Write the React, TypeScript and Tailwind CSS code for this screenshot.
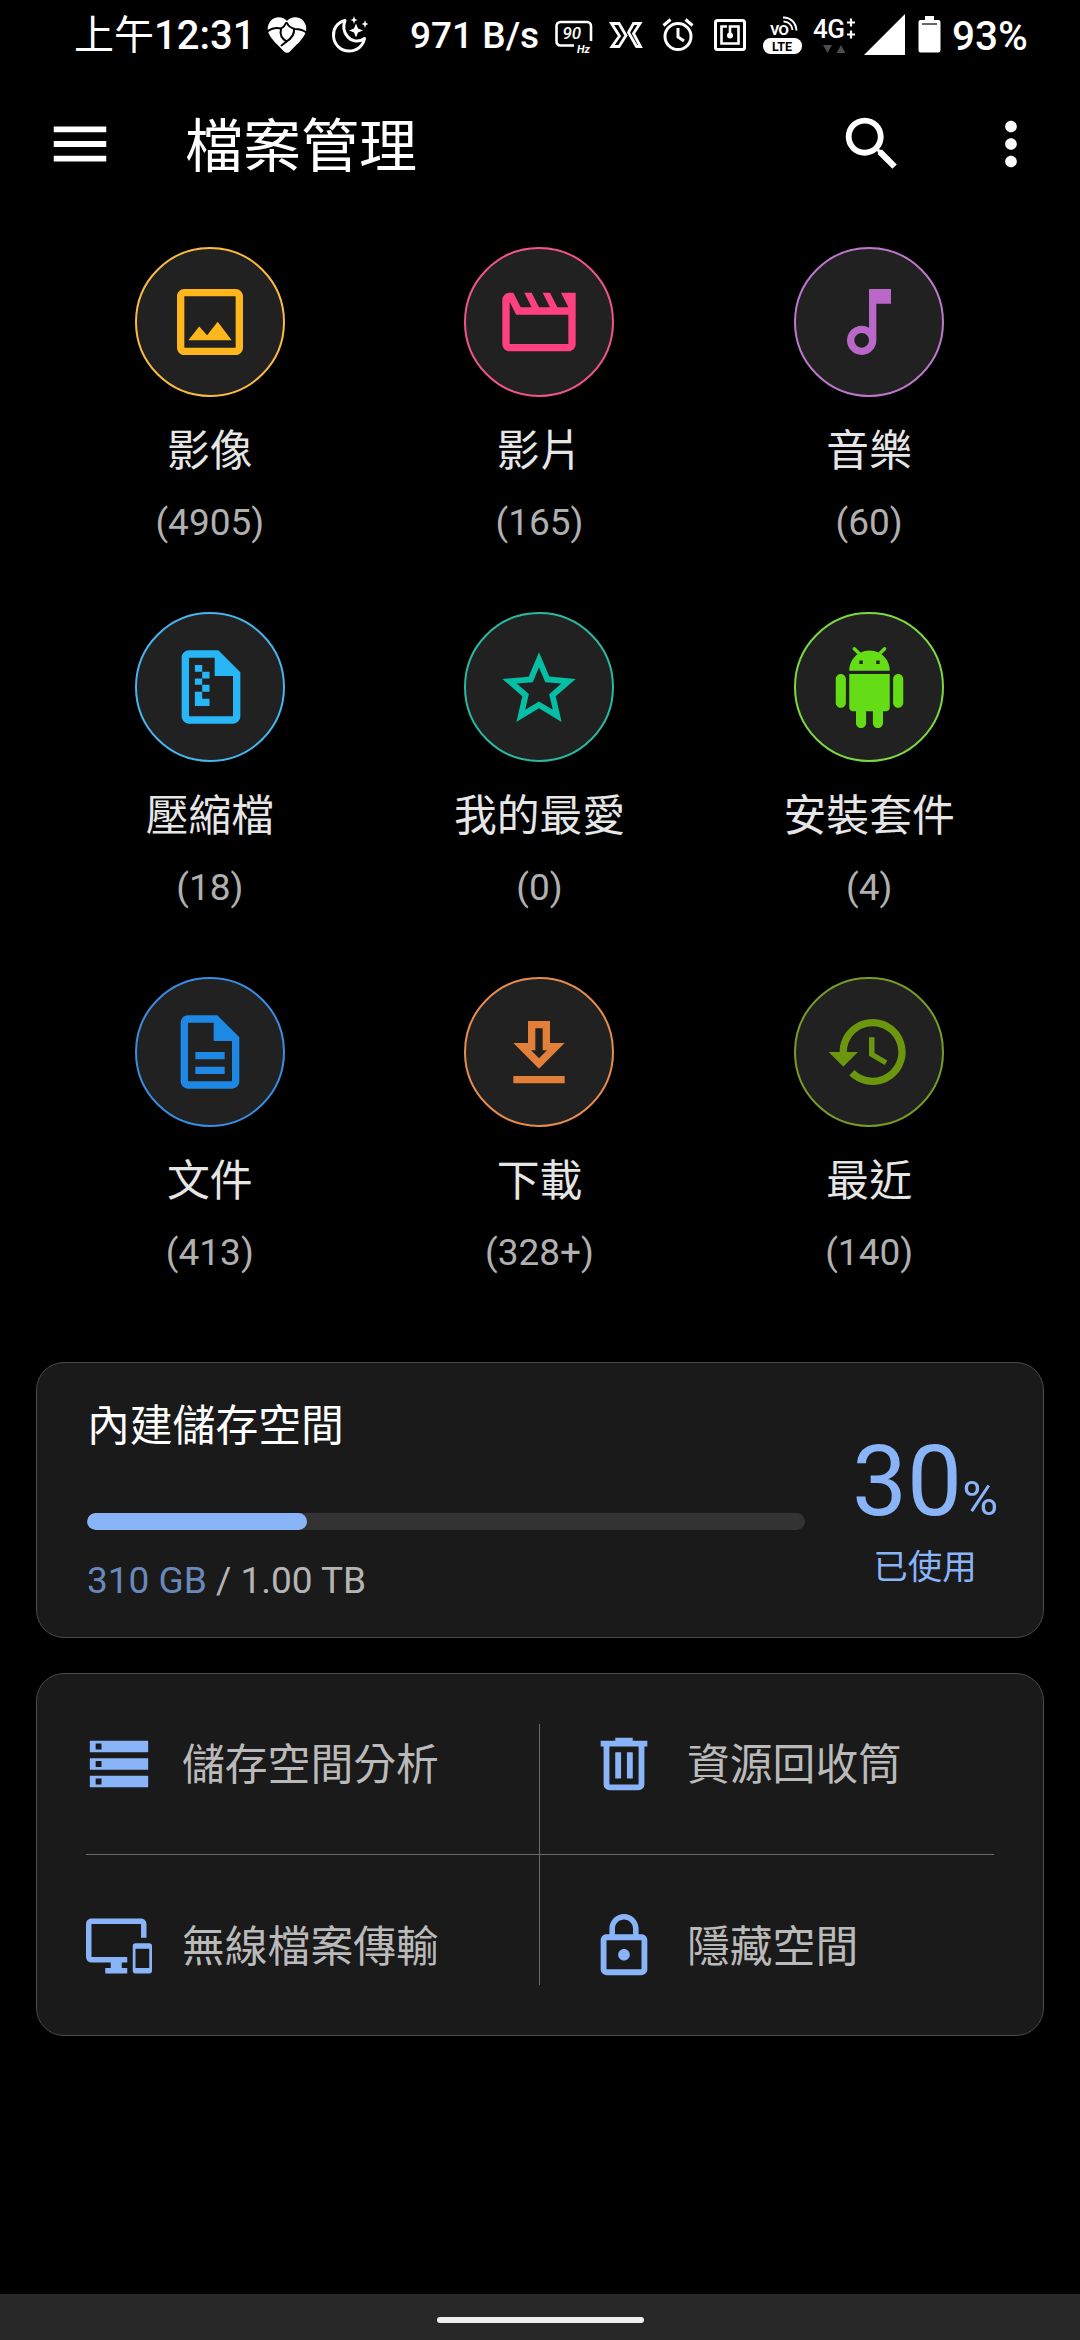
import type { ReactNode } from "react";

type Category = {
  label: string;
  count: string;
  ring: string;
  icon: ReactNode;
};

function Glyph({ d, className = "w-[88px] h-[88px]" }: { d: string; className?: string }) {
  return (
    <svg viewBox="0 0 24 24" fill="currentColor" fillRule="evenodd" className={className}>
      <path d={d} />
    </svg>
  );
}

const PAGE =
  "M14 2H6c-1.1 0-2 .9-2 2v16c0 1.1.9 2 2 2h12c1.1 0 2-.9 2-2V8l-6-6zm4 18H6V4h7v5h5v11z";

const ICONS = {
  image:
    "M19 3H5c-1.1 0-2 .9-2 2v14c0 1.1.9 2 2 2h14c1.1 0 2-.9 2-2V5c0-1.1-.9-2-2-2zm0 16H5V5h14v14zM6.1 16.95 9.05 13.2 11.2 15.6 14.1 11.95 17.9 16.95z",
  movie:
    "M4 6.47L5.76 10H20v8H4V6.47M22 4h-4l2 4h-3l-2-4h-2l2 4h-3l-2-4H8l2 4H7L5 4H4c-1.1 0-2 .9-2 2v12c0 1.1.9 2 2 2h16c1.1 0 2-.9 2-2V4z",
  music:
    "M12 3l.01 10.55c-.59-.34-1.27-.55-2-.55C7.79 13 6 14.79 6 17s1.79 4 4.01 4S14 19.21 14 17V7h4V3h-6zm-1.99 16c-1.1 0-2-.9-2-2s.9-2 2-2 2 .9 2 2-.9 2-2 2z",
  zip: `${PAGE}M7.6 6h2v1.85h2v1.8h-2v1.75h2v1.9h-2v1.9h2v1.95h-4v-3.85h2v-1.9h-2V9.65h2v-1.8h-2z`,
  star: "M22 9.24l-7.19-.62L12 2 9.19 8.63 2 9.24l5.46 4.73L5.82 21 12 17.27 18.18 21l-1.63-7.03L22 9.24zM12 15.4l-3.76 2.27 1-4.28-3.32-2.88 4.38-.38L12 6.1l1.71 4.04 4.38.38-3.32 2.88 1 4.28L12 15.4z",
  android:
    "M6 18c0 .55.45 1 1 1h1v3.5c0 .83.67 1.5 1.5 1.5s1.5-.67 1.5-1.5V19h2v3.5c0 .83.67 1.5 1.5 1.5s1.5-.67 1.5-1.5V19h1c.55 0 1-.45 1-1V8H6v10zM3.5 8C2.67 8 2 8.67 2 9.5v7c0 .83.67 1.5 1.5 1.5S5 17.33 5 16.5v-7C5 8.67 4.33 8 3.5 8zm17 0c-.83 0-1.5.67-1.5 1.5v7c0 .83.67 1.5 1.5 1.5s1.5-.67 1.5-1.5v-7c0-.83-.67-1.5-1.5-1.5zm-4.97-5.84l1.3-1.3c.2-.2.2-.51 0-.71-.2-.2-.51-.2-.71 0l-1.48 1.48C13.85 1.23 12.95 1 12 1c-.96 0-1.86.23-2.66.63L7.85.15c-.2-.2-.51-.2-.71 0-.2.2-.2.51 0 .71l1.31 1.31C6.97 3.26 6 5.01 6 7h12c0-1.99-.97-3.75-2.47-4.84zM10 5H9V4h1v1zm5 0h-1V4h1v1z",
  doc: `${PAGE}M8 16h8v2H8zM8 12h8v2H8z`,
  download:
    "M19 9h-4V3H9v6H5l7 7 7-7zm-8 2V5h2v6h1.17L12 13.17 9.83 11H11zm-6 7h14v2H5z",
  history:
    "M13 3c-4.97 0-9 4.03-9 9H1l3.89 3.89.07.14L9 12H6c0-3.87 3.13-7 7-7s7 3.13 7 7-3.13 7-7 7c-1.93 0-3.68-.79-4.94-2.06l-1.42 1.42C8.27 19.99 10.51 21 13 21c4.97 0 9-4.03 9-9s-4.03-9-9-9zm-1 5v5l4.28 2.54.72-1.21-3.5-2.08V8H12z",
  menu: "M3 18h18v-2H3v2zm0-5h18v-2H3v2zm0-7v2h18V6H3z",
  search:
    "M15.5 14h-.79l-.28-.27C15.41 12.59 16 11.11 16 9.5 16 5.91 13.09 3 9.5 3S3 5.91 3 9.5 5.91 16 9.5 16c1.61 0 3.09-.59 4.23-1.57l.27.28v.79l5 4.99L20.49 19l-4.99-5zm-6 0C7.01 14 5 11.99 5 9.5S7.01 5 9.5 5 14 7.01 14 9.5 11.99 14 9.5 14z",
  more: "M12 8c1.1 0 2-.9 2-2s-.9-2-2-2-2 .9-2 2 .9 2 2 2zm0 2c-1.1 0-2 .9-2 2s.9 2 2 2 2-.9 2-2-.9-2-2-2zm0 6c-1.1 0-2 .9-2 2s.9 2 2 2 2-.9 2-2-.9-2-2-2z",
  storage: "M2 20h20v-4H2v4zm2-3h2v2H4v-2zM2 4v4h20V4H2zm4 3H4V5h2v2zm-4 7h20v-4H2v4zm2-3h2v2H4v-2z",
  trash:
    "M9 3v1H4v2h1v13a2 2 0 0 0 2 2h10a2 2 0 0 0 2-2V6h1V4h-5V3H9M7 6h10v13H7V6M9 8v9h2V8H9M13 8v9h2V8h-2z",
  devices:
    "M23 11H18A1 1 0 0 0 17 12V21A1 1 0 0 0 18 22H23A1 1 0 0 0 24 21V12A1 1 0 0 0 23 11M23 20H18V13H23V20M20 2H2C.89 2 0 2.89 0 4V16A2 2 0 0 0 2 18H9V20H7V22H15V20H13V18H15V16H2V4H20V9H22V4C22 2.89 21.1 2 20 2Z",
  lock: "M12 17c1.1 0 2-.9 2-2s-.9-2-2-2-2 .9-2 2 .9 2 2 2zm6-9h-1V6c0-2.76-2.24-5-5-5S7 3.24 7 6v2H6c-1.1 0-2 .9-2 2v10c0 1.1.9 2 2 2h12c1.1 0 2-.9 2-2V10c0-1.1-.9-2-2-2zM8.9 6c0-1.71 1.39-3.1 3.1-3.1s3.1 1.39 3.1 3.1v2H8.9V6zM18 20H6V10h12v10z",
};

const CATEGORIES: Category[] = [
  { label: "影像", count: "(4905)", ring: "text-[#fdb71c] border-[#fabb40]", icon: <Glyph d={ICONS.image} /> },
  { label: "影片", count: "(165)", ring: "text-[#ff4081] border-[#f0558a]", icon: <Glyph d={ICONS.movie} /> },
  { label: "音樂", count: "(60)", ring: "text-[#b968c7] border-[#bd78cc]", icon: <Glyph d={ICONS.music} /> },
  { label: "壓縮檔", count: "(18)", ring: "text-[#29b6f6] border-[#47b4ec]", icon: <Glyph d={ICONS.zip} className="w-[88px] h-[88px] ml-[2px]" /> },
  { label: "我的最愛", count: "(0)", ring: "text-[#05bfa5] border-[#2ab8a2]", icon: <Glyph d={ICONS.star} className="w-[88px] h-[88px] mt-[3px]" /> },
  { label: "安裝套件", count: "(4)", ring: "text-[#64dd17] border-[#7cd840]", icon: <Glyph d={ICONS.android} className="w-[81px] h-[81px]" /> },
  { label: "文件", count: "(413)", ring: "text-[#1e88e5] border-[#398de0]", icon: <Glyph d={ICONS.doc} /> },
  { label: "下載", count: "(328+)", ring: "text-[#e27f38] border-[#e68c4c]", icon: <Glyph d={ICONS.download} className="w-[88px] h-[88px] mt-[3px]" /> },
  { label: "最近", count: "(140)", ring: "text-[#6b960e] border-[#789b28]", icon: <Glyph d={ICONS.history} /> },
];

function StatusBar() {
  return (
    <div className="flex h-[72px] items-center pl-[74px] font-medium whitespace-nowrap">
      <span className="w-[192px] shrink-0 text-[40px] leading-[48px]">
        <span className="font-normal">上午</span>12:31
      </span>

      {/* heart */}
      <svg viewBox="0 0 42 48" className="h-12 w-[42px] shrink-0" fill="#fff">
        <path d="M21 9C18 5 10 3.500 5.500 8 1.500 12 1 17 2.500 21c3 7 10 12.500 15.500 18.500a4 4 0 0 0 6 0C29.500 33.500 36.500 28 39.500 21c1.500-4 1-9-3-13C32 3.500 24 5 21 9z" />
        <g fill="none" stroke="#000" strokeWidth="2" strokeLinecap="round">
          <path d="M0 21c3-4 9-6 15-4.500 2-1 4-3 5-5.500" />
          <path d="M21 11c1 3 4 5 8 6 5 0 9 1.500 12 4" />
          <path d="M15 17c-1.500 6 .5 9.500 5.500 12.500C26 26 28.500 22 28 17" />
          <path d="M20.500 29.500l-5 4" />
        </g>
      </svg>

      {/* moon */}
      <svg viewBox="0 0 40 48" className="ml-[22px] h-12 w-10 shrink-0" fill="none" stroke="#fff" strokeWidth="3" strokeLinejoin="round">
        <path d="M15 8.500C7 10.500 3 17 3.500 24 4 33 11 39 19 39c8 0 14-5 15.500-12.500C28 31 21 29 17.500 24.500 13.500 20 13 14 15 8.500z" />
        <g fill="#fff" stroke="none">
          <path d="M26 11.500l2 5 5 2-5 2-2 5-2-5-5-2 5-2z" />
          <path d="M24 4l1 3 2.500 1-2.500 1-1 3-1-3-2.500-1 2.500-1zM35 8l1 3 2.500 1-2.500 1-1 3-1-3-2.500-1 2.500-1z" />
        </g>
      </svg>

      <span className="ml-10 w-[144px] shrink-0 text-[37px] leading-[48px]">971 B/s</span>

      {/* refresh rate */}
      <svg viewBox="0 0 40 48" className="h-12 w-10 shrink-0" fill="#fff">
        <path d="M20 33.500H6.500a4 4 0 0 1-4-4V14a4 4 0 0 1 4-4H33a4 4 0 0 1 4 4v15" fill="none" stroke="#fff" strokeWidth="2.600" />
        <text x="8.500" y="26.500" fontSize="17" fontStyle="italic" fontFamily="Roboto">90</text>
        <text x="23" y="41" fontSize="11" fontWeight="700" fontStyle="italic" fontFamily="Roboto">Hz</text>
      </svg>

      {/* game mode */}
      <svg viewBox="0 0 34 48" className="ml-[15px] h-12 w-[34px] shrink-0" fill="none" stroke="#fff" strokeWidth="2.800">
        <path d="M2.500 11.500H10L17 23.500 10 34.500H3L10.500 24z" />
        <path d="M31 11.500h-6.500l-5 9 8 14H31.500l-7-13z" />
      </svg>

      {/* alarm */}
      <svg viewBox="0 0 32 48" className="ml-[19px] h-12 w-8 shrink-0" fill="none" stroke="#fff" strokeWidth="3">
        <circle cx="16" cy="24.500" r="13" />
        <path d="M16 16v9l6 4M1.500 13.500l7-6M30.500 13.500l-7-6" />
      </svg>

      {/* nfc */}
      <svg viewBox="0 0 32 48" className="ml-[20px] h-12 w-8 shrink-0" fill="none" stroke="#fff" strokeWidth="3">
        <rect x="1.500" y="8.500" width="29" height="29" rx="2" />
        <path d="M13 14.500H7.500v17h17v-17H16v8" strokeWidth="2.600" />
        <circle cx="16" cy="23.500" r="3" fill="#fff" stroke="none" />
      </svg>

      {/* volte */}
      <svg viewBox="0 0 40 48" className="ml-[17px] h-12 w-10 shrink-0" fill="#fff">
        <text x="7" y="22.500" fontSize="19" fontWeight="500" fontFamily="Roboto" textLength="19">vo</text>
        <path d="M20 5.500c7-.5 13 5 13.500 13M20.500 9.500c5 0 8.500 3.500 9 8.500" fill="none" stroke="#fff" strokeWidth="2" />
        <rect x="0" y="26" width="39" height="16" rx="7.500" />
        <text x="9" y="38.500" fontSize="12.500" fontWeight="700" fontFamily="Roboto" fill="#000" textLength="20">LTE</text>
      </svg>

      {/* network type */}
      <svg viewBox="0 0 44 48" className="ml-[10px] h-12 w-11 shrink-0" fill="#fff">
        <text x="0" y="26" fontSize="26" fontWeight="500" fontFamily="Roboto" textLength="32">4G</text>
        <path d="M34 10.500h8M38 6.500v8M34 22.500h8M38 18.500v8" stroke="#fff" strokeWidth="2.200" />
        <path d="M10 33h9l-4.500 8zM23.500 41h9L28 33z" fill="#4c4c4c" />
      </svg>

      <svg viewBox="0 0 42 48" className="ml-[7px] h-12 w-[42px] shrink-0" fill="#fff">
        <path d="M0 43 41 2v41z" />
      </svg>

      {/* battery */}
      <svg viewBox="0 0 23 48" className="ml-[12px] h-12 w-[23px] shrink-0" fill="#fff">
        <path d="M7 4h9v4h4.500a2 2 0 0 1 2 2v28.500a2 2 0 0 1-2 2h-18a2 2 0 0 1-2-2V10a2 2 0 0 1 2-2H7z" />
        <path d="M4 12h15" stroke="#333" strokeWidth="1.500" />
      </svg>

      <span className="ml-[11px] text-[40.5px] leading-[48px]">93%</span>
    </div>
  );
}

function Tool({ icon, label, size = "w-[70px] h-[70px]" }: { icon: string; label: string; size?: string }) {
  return (
    <div className="flex h-[182px] items-center">
      <div className="flex w-[70px] justify-center pb-[3px] text-[#8ab4f8]">
        <Glyph d={icon} className={size} />
      </div>
      <span className="ml-[28px] text-[42.8px] leading-[60px] text-[#bababa]">{label}</span>
    </div>
  );
}

export default function App() {
  const used = 30.6;

  return (
    <div className="flex h-[2340px] w-[1080px] flex-col overflow-hidden bg-black font-[Roboto,'Noto_Sans_CJK_TC',sans-serif] text-white">
      <StatusBar />

      <header className="flex h-[144px] items-center pl-[45px]">
        <Glyph d={ICONS.menu} className="h-[70px] w-[70px]" />
        <h1 className="mt-[5px] ml-[70px] text-[58px] leading-[80px]">檔案管理</h1>
        <Glyph d={ICONS.search} className="ml-auto h-[70px] w-[70px]" />
        <Glyph d={ICONS.more} className="mr-[34px] ml-[69px] h-[70px] w-[70px]" />
      </header>

      <main className="flex flex-col">
        <section className="mt-[31px] mr-[46px] ml-[45px] grid grid-cols-3">
          {CATEGORIES.map((c) => (
            <div key={c.label} className="flex h-[365px] flex-col items-center">
              <div className={`flex h-[150px] w-[150px] items-center justify-center rounded-full border-2 bg-[#212121] ${c.ring}`}>
                {c.icon}
              </div>
              <span className="mt-[22px] text-[42.8px] leading-[64px] text-[#e6e6e6]">{c.label}</span>
              <span className="mt-[18px] text-[37px] leading-[44px] text-[#b0b0b0]">{c.count}</span>
            </div>
          ))}
        </section>

        <section className="mx-[36px] mt-[20px] flex h-[276px] rounded-[28px] border border-[#4a4a4a] bg-[#1a1a1a] pl-[50px]">
          <div className="w-[718px]">
            <h2 className="mt-[31px] text-[42.8px] leading-[64px]">內建儲存空間</h2>
            <div className="mt-[55px] h-[17px] overflow-hidden rounded-full bg-[#333]">
              <div className="h-full rounded-full bg-[#8ab4f8]" style={{ width: `${used}%` }} />
            </div>
            <p className="mt-[29px] text-[37px] leading-[44px] text-[#b5b5b5]">
              <span className="text-[#6a88ba]">310 GB</span> / 1.00 TB
            </p>
          </div>
          <div className="ml-[20px] flex w-[200px] flex-col items-center text-[#8ab4f8]">
            <div className="mt-[62px] text-[98px] leading-[114px] whitespace-nowrap">
              30<span className="text-[49px]">%</span>
            </div>
            <span className="-mt-[14px] text-[34.5px] leading-[50px]">已使用</span>
          </div>
        </section>

        <section className="relative mx-[36px] mt-[35px] h-[363px] rounded-[28px] border border-[#4a4a4a] bg-[#1a1a1a]">
          <div className="grid grid-cols-[505px_1fr] pl-[47px]">
            <Tool icon={ICONS.storage} label="儲存空間分析" />
            <Tool icon={ICONS.trash} label="資源回收筒" />
            <Tool icon={ICONS.devices} label="無線檔案傳輸" size="w-[66px] h-[66px]" />
            <Tool icon={ICONS.lock} label="隱藏空間" />
          </div>
          <div className="absolute top-[180px] left-[49px] h-px w-[908px] bg-[#6a6a6a]" />
          <div className="absolute top-[50px] left-[502px] h-[261px] w-px bg-[#6a6a6a]" />
        </section>
      </main>

      <footer className="mt-auto flex h-[46px] justify-center bg-[#282828] pt-[23px]">
        <div className="h-[6px] w-[207px] rounded-full bg-[#eee]" />
      </footer>
    </div>
  );
}
